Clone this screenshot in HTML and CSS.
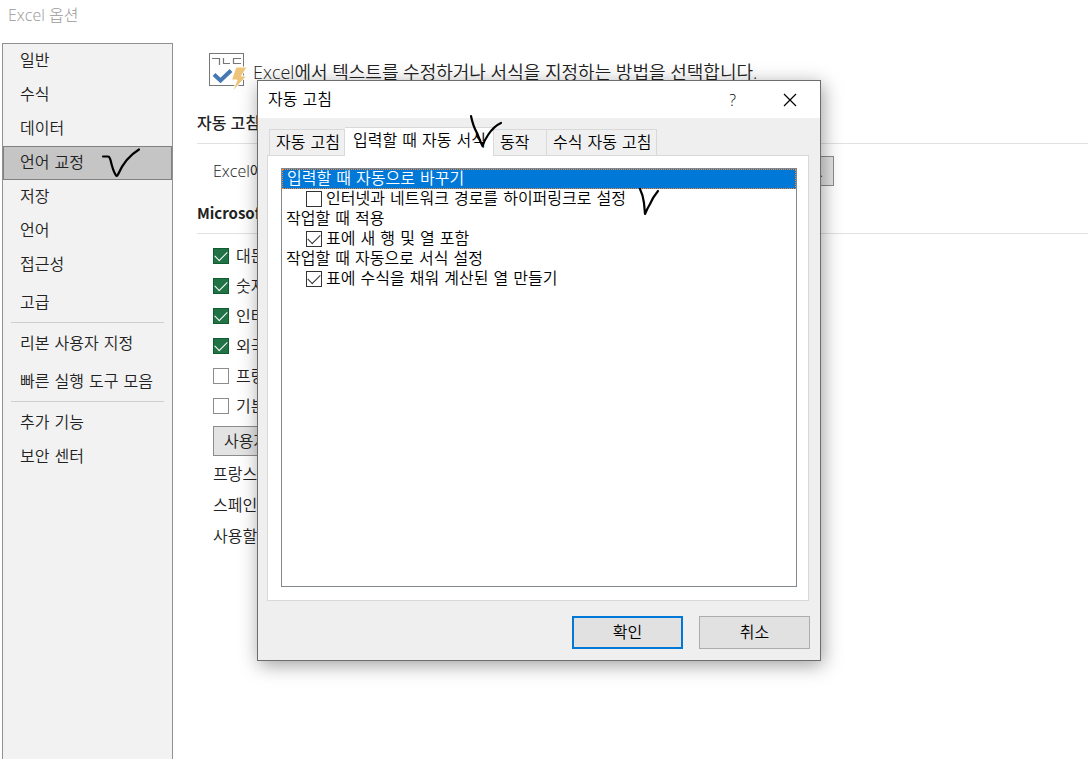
FILE: index.html
```
<!DOCTYPE html>
<html lang="ko">
<head>
<meta charset="utf-8">
<title>Excel 옵션</title>
<link rel="stylesheet" href="styles.css">
</head>
<body>
<div class="window">
  <h1 class="window-title">Excel 옵션</h1>
  <div class="window-body">
    <nav class="sidebar">
      <a class="nav-item" href="#general">일반</a>
      <a class="nav-item" href="#formulas">수식</a>
      <a class="nav-item" href="#data">데이터</a>
      <a class="nav-item selected" href="#proofing">언어 교정
        <svg class="mark mark-nav" width="40" height="32" viewBox="0 0 40 32"><path d="M3 10.500H8Q9.500 10.500 10.500 14Q13 25 16 29.500Q17 30.500 18 28.500Q25 12 39 3.500"/></svg>
      </a>
      <a class="nav-item" href="#save">저장</a>
      <a class="nav-item" href="#language">언어</a>
      <a class="nav-item" href="#access">접근성</a>
      <a class="nav-item spaced" href="#advanced">고급</a>
      <hr class="nav-line">
      <a class="nav-item" href="#ribbon">리본 사용자 지정</a>
      <a class="nav-item spaced" href="#toolbar">빠른 실행 도구 모음</a>
      <hr class="nav-line">
      <a class="nav-item" href="#addins">추가 기능</a>
      <a class="nav-item" href="#trust">보안 센터</a>
    </nav>
    <main class="content">
      <header class="intro">
        <svg class="intro-icon" width="40" height="40" viewBox="0 0 40 40">
          <rect x="1.500" y="1.500" width="34" height="32" fill="#fff" stroke="#777"/>
          <path d="M4 6.500H11.500V13M15.500 6V11.500H22M33 6.500H25.500V11.500H33" fill="none" stroke="#777" stroke-width="1.200"/>
          <path d="M6 22.500L12.500 28.500L23 18.500" fill="none" stroke="#4679b4" stroke-width="4"/>
          <path d="M28 15H39L33.500 24H38.500L24.500 39.500L29 28H23.500Z" fill="#edc47a" stroke="#fff"/>
        </svg>
        <p class="intro-text">Excel에서 텍스트를 수정하거나 서식을 지정하는 방법을 선택합니다.</p>
      </header>
      <h2 class="section-title">자동 고침</h2>
      <div class="option-row">
        <span>Excel에서</span>
        <button class="gray-button" type="button">자동 고침 옵션...</button>
      </div>
      <h2 class="section-title">Microsoft</h2>
      <div class="options">
        <label class="option"><input class="box" type="checkbox" checked>대문자</label>
        <label class="option"><input class="box" type="checkbox" checked>숫자</label>
        <label class="option"><input class="box" type="checkbox" checked>인터넷</label>
        <label class="option"><input class="box" type="checkbox" checked>외국어</label>
        <label class="option"><input class="box" type="checkbox">프랑스</label>
        <label class="option"><input class="box" type="checkbox">기본</label>
        <button class="gray-button dictionary" type="button">사용자</button>
        <p class="language">프랑스어</p>
        <p class="language">스페인어</p>
        <p class="language">사용할</p>
      </div>
    </main>
  </div>

  <section class="dialog" role="dialog" aria-labelledby="dialog-title">
    <header class="dialog-bar">
      <h2 class="dialog-title" id="dialog-title">자동 고침</h2>
      <button class="bar-button" type="button" aria-label="도움말">?</button>
      <button class="bar-button" type="button" aria-label="닫기">
        <svg width="14" height="14" viewBox="0 0 14 14"><path d="M1 1L13 13M13 1L1 13" stroke="#000" stroke-width="1.200"/></svg>
      </button>
    </header>
    <div class="dialog-body">
      <div class="tabs" role="tablist">
        <button class="tab" type="button" role="tab">자동 고침</button>
        <button class="tab active" type="button" role="tab" aria-selected="true">입력할 때 자동 서식
          <svg class="mark mark-tab" width="36" height="36" viewBox="0 0 36 36"><path d="M3 3Q5 13 9 20Q12 28 14.500 33Q16 28 20 22Q26 13 33 10"/></svg>
        </button>
        <button class="tab short" type="button" role="tab">동작</button>
        <button class="tab" type="button" role="tab">수식 자동 고침</button>
      </div>
      <div class="panel" role="tabpanel">
        <ul class="list">
          <li class="row highlighted">입력할 때 자동으로 바꾸기</li>
          <li class="row nested"><label class="choice"><input class="tick" type="checkbox">인터넷과 네트워크 경로를 하이퍼링크로 설정</label>
            <svg class="mark mark-row" width="24" height="32" viewBox="0 0 24 32"><path d="M3 3Q6 9 7 17L8 28Q10 23 13 18Q16 11 21 5"/></svg>
          </li>
          <li class="row">작업할 때 적용</li>
          <li class="row nested"><label class="choice"><input class="tick" type="checkbox" checked>표에 새 행 및 열 포함</label></li>
          <li class="row">작업할 때 자동으로 서식 설정</li>
          <li class="row nested"><label class="choice"><input class="tick" type="checkbox" checked>표에 수식을 채워 계산된 열 만들기</label></li>
        </ul>
      </div>
      <footer class="actions">
        <button class="action primary" type="button">확인</button>
        <button class="action" type="button">취소</button>
      </footer>
    </div>
  </section>
</div>
</body>
</html>
```
FILE: styles.css
```
* { box-sizing: border-box; }
body {
  margin: 0;
  background: #fff;
  color: #222;
  font: 350 16px/20px "Open Sans", "Noto Sans CJK KR", sans-serif;
}
button, input { font: inherit; color: inherit; margin: 0; }
h1, h2, p, ul { margin: 0; padding: 0; }

.window {
  position: relative;
  display: flex;
  flex-direction: column;
  min-height: 100vh;
  overflow: hidden;
}
.window-title {
  padding: 5px 8px 18px;
  font-size: 16px;
  font-weight: 300;
  color: #999;
}
.window-body { display: flex; flex: 1; }

.sidebar {
  flex: none;
  width: 171px;
  margin-left: 2px;
  border: 1px solid #919191;
  border-bottom: 0;
  background: #f2f2f2;
  font-family: "DejaVu Sans", "Noto Sans CJK KR", sans-serif;
}
.nav-item {
  position: relative;
  display: flex;
  align-items: center;
  height: 34px;
  padding-left: 16px;
  border: 1px solid transparent;
  color: #222;
  text-decoration: none;
  white-space: nowrap;
}
.selected { background: #c5c5c5; border-color: #808080; }
.spaced { margin-top: 4px; }
.nav-line {
  height: 1px;
  margin: 2px 8px 4px;
  border: 0;
  background: #cfcfcf;
}

.content { flex: 1; min-width: 0; padding: 9px 0 0 24px; }
.intro { display: flex; padding-left: 11px; gap: 5px; }
.intro-icon { flex: none; }
.intro-text {
  padding-top: 10px;
  font-size: 18px;
  white-space: nowrap;
}
.section-title {
  padding: 0 0 10px;
  border-bottom: 1px solid #e1e1e1;
  font-size: 16px;
  line-height: 20px;
  font-weight: 500;
  margin-top: 21px;
}
.option-row {
  display: flex;
  align-items: center;
  width: 637px;
  padding: 12px 0 0 16px;
  justify-content: space-between;
}
.option-row + .section-title {
  margin-top: 17px;
  font-family: "Noto Sans CJK KR", sans-serif;
  font-size: 15px;
  font-weight: 700;
}
.gray-button {
  height: 30px;
  padding: 0 10px;
  border: 1px solid #8c8c8c;
  background: #e3e3e3;
}
.options { padding: 7px 0 0 16px; }
.option { display: flex; align-items: center; gap: 7px; height: 30px; }
.box, .tick {
  appearance: none;
  flex: none;
  width: 16px;
  height: 16px;
  border: 1px solid #8c8c8c;
  background: #fff;
  display: grid;
  place-items: center;
}
.box:checked { background: #217346; border-color: #0e5c2f; }
.box:checked::before, .tick:checked::before {
  content: "";
  width: 11px;
  height: 6px;
  border: solid #fff;
  border-width: 0 0 1px 1px;
  transform: translateY(-2px) rotate(-45deg);
}
.dictionary { display: block; width: 110px; margin: 5px 0 3px; text-align: left; }
.language { line-height: 31px; }

.dialog {
  position: absolute;
  left: 257px;
  top: 80px;
  width: 564px;
  border: 1px solid #6d6d6d;
  background: #efefef;
  color: #000;
  font-family: "DejaVu Sans", "Noto Sans CJK KR", sans-serif;
  box-shadow: 2px 4px 18px rgba(0, 0, 0, 0.38);
}
.dialog-bar {
  display: flex;
  align-items: center;
  height: 37px;
  padding: 0 2px 0 10px;
  background: #fff;
}
.dialog-title { flex: 1; font-size: 16px; font-weight: 350; }
.bar-button {
  display: flex;
  align-items: center;
  justify-content: center;
  width: 57px;
  height: 36px;
  padding: 0;
  border: 0;
  background: none;
  font-family: "Open Sans", sans-serif;
}
.dialog-body { padding: 9px 11px 11px 9px; }
.tabs { display: flex; align-items: flex-end; padding-left: 2px; }
.tab {
  position: relative;
  height: 26px;
  padding: 0 4px 0 6px;
  border: 1px solid #d9d9d9;
  border-bottom: 0;
  border-left-width: 0;
  background: #f0f0f0;
  white-space: nowrap;
}
.tab:first-child { border-left-width: 1px; }
.active {
  z-index: 1;
  height: 29px;
  margin-bottom: -1px;
  padding: 0 7px 3px 8px;
  background: #fff;
}
.short { width: 53px; text-align: left; }
.panel { padding: 12px 11px 13px 13px; border: 1px solid #d9d9d9; background: #fff; }
.list {
  min-height: 419px;
  border: 1px solid #828790;
  list-style: none;
}
.row {
  position: relative;
  display: flex;
  height: 20px;
  padding-left: 4px;
  white-space: nowrap;
}
.highlighted {
  border: 1px dotted #ff8728;
  background: #0078d7;
  color: #fff;
  line-height: 18px;
}
.nested { padding-left: 24px; }
.choice { display: flex; align-items: center; gap: 4px; }
.tick { border-color: #333; }
.tick:checked::before { border-color: #333; }
.actions { display: flex; justify-content: flex-end; gap: 16px; padding-top: 15px; margin-right: -1px; }
.action {
  width: 111px;
  height: 33px;
  padding: 0;
  border: 1px solid #adadad;
  background: #e1e1e1;
}
.primary { border: 2px solid #0078d7; }

.mark {
  position: absolute;
  z-index: 2;
  fill: none;
  stroke: #000;
  stroke-width: 2.2;
  stroke-linecap: round;
  stroke-linejoin: round;
  overflow: visible;
}
.mark-nav { left: 96px; top: -1px; }
.mark-tab { right: -11px; top: -15px; }
.mark-row { left: 355px; top: -3px; }
```
